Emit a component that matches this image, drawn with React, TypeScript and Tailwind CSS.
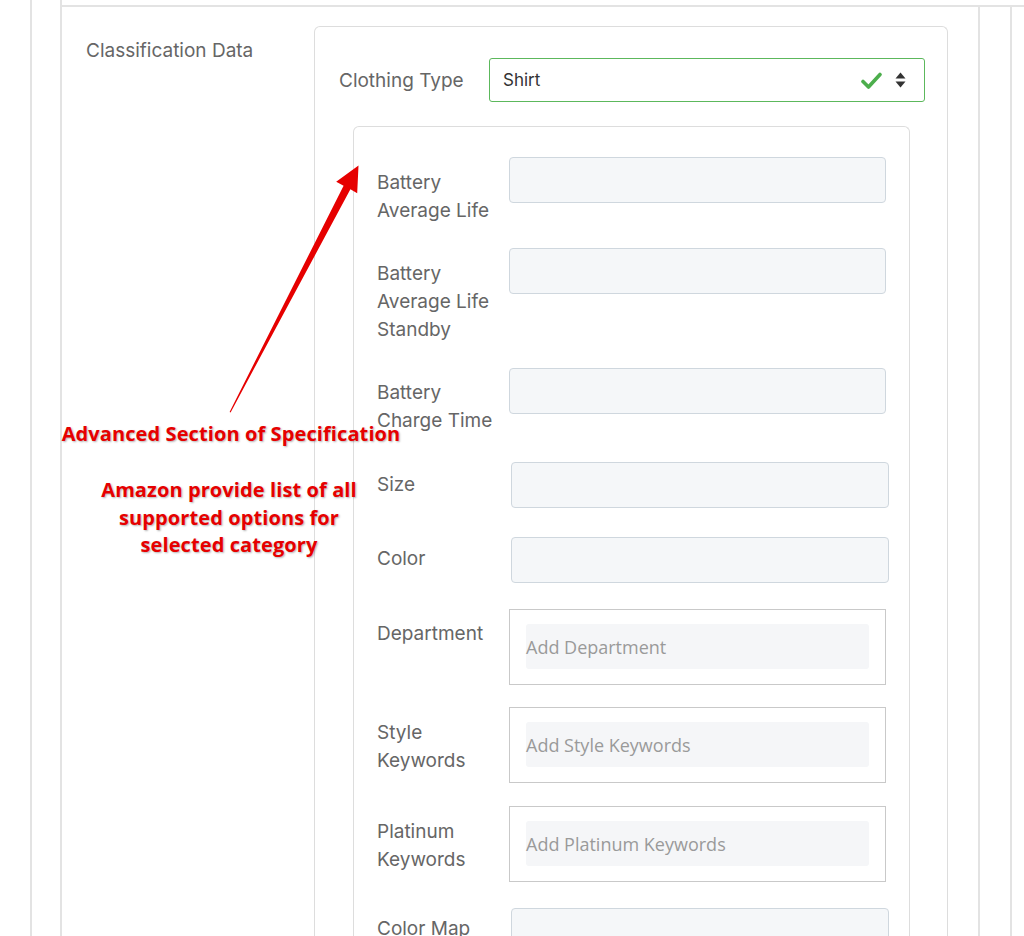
import React from "react";

interface Field {
  label: string[];
  kind: "input" | "tags";
  placeholder?: string;
  gap: number;
  labelPad: number;
  shifted?: boolean;
}

const fields: Field[] = [
  { label: ["Battery", "Average Life"], kind: "input", gap: 0, labelPad: 12 },
  { label: ["Battery", "Average Life", "Standby"], kind: "input", gap: 23, labelPad: 12 },
  { label: ["Battery", "Charge Time"], kind: "input", gap: 24, labelPad: 11 },
  { label: ["Size"], kind: "input", gap: 27, labelPad: 9, shifted: true },
  { label: ["Color"], kind: "input", gap: 29, labelPad: 8, shifted: true },
  { label: ["Department"], kind: "tags", placeholder: "Add Department", gap: 26, labelPad: 11 },
  { label: ["Style", "Keywords"], kind: "tags", placeholder: "Add Style Keywords", gap: 22, labelPad: 12 },
  { label: ["Platinum", "Keywords"], kind: "tags", placeholder: "Add Platinum Keywords", gap: 23, labelPad: 12 },
  { label: ["Color Map"], kind: "input", gap: 26, labelPad: 7, shifted: true },
];

function SpecRow({ field }: { field: Field }) {
  return (
    <div className="flex items-start" style={{ marginTop: field.gap }}>
      <div
        className="w-[132px] shrink-0 text-[19px] leading-[28px] text-[#666]"
        style={{ paddingTop: field.labelPad }}
      >
        {field.label.map((l) => (
          <div key={l}>{l}</div>
        ))}
      </div>
      {field.kind === "input" ? (
        <div
          className={`h-[46px] flex-1 rounded-[4px] border border-[#cfd7de] bg-[#f5f7f9] ${
            field.shifted ? "ml-[2px] -mr-[3px]" : ""
          }`}
        />
      ) : (
        <div className="flex-1 h-[76px] border border-[#c9c9c9] bg-white px-[16px] pt-[14px]">
          <div className="h-[45px] rounded-[3px] bg-[#f5f6f8] flex items-center pt-[2px] font-['Open_Sans',sans-serif] text-[18px] text-[#9a9a9a]">
            {field.placeholder}
          </div>
        </div>
      )}
    </div>
  );
}

function SelectBox() {
  return (
    <div className="flex h-[44px] w-[436px] items-center rounded-[3px] border border-[#5cb85c] pl-[13px] pr-[18px]">
      <span className="flex-1 pt-[2px] text-[17px] text-[#333]">Shirt</span>
      <svg width="21" height="17" viewBox="0 0 21 17" className="mr-[13px]">
        <path
          d="M2 9.5 L7.5 15 L19 2.5"
          fill="none"
          stroke="#4cae4c"
          strokeWidth="3.6"
          strokeLinecap="round"
          strokeLinejoin="round"
        />
      </svg>
      <svg width="11" height="16" viewBox="0 0 11 16">
        <path d="M5.5 0.5 L10.5 6.5 L0.5 6.5 Z" fill="#333" />
        <path d="M0.5 9.5 L10.5 9.5 L5.5 15.5 Z" fill="#333" />
      </svg>
    </div>
  );
}

function Annotation() {
  return (
    <>
      <svg
        className="absolute left-0 top-0 pointer-events-none"
        width="1024"
        height="936"
        viewBox="0 0 1024 936"
      >
        <polygon
          points="229.6,412 343.6,185.7 336.2,181.8 358.5,165.5 357.2,193.2 350.4,189.3 230.6,412.4"
          fill="#e60000"
        />
      </svg>
      <div className="absolute left-[31px] top-[420px] w-[400px] text-center font-['Open_Sans',sans-serif] text-[20px] font-bold leading-[28px] tracking-[0.1px] text-[#e60000] [text-shadow:1px_1px_2px_rgba(0,0,0,0.3)]">
        Advanced Section of Specification
      </div>
      <div className="absolute left-[29px] top-[476px] w-[400px] text-center font-['Open_Sans',sans-serif] text-[20px] font-bold leading-[27.5px] tracking-[0.1px] text-[#e60000] [text-shadow:1px_1px_2px_rgba(0,0,0,0.3)]">
        Amazon provide list of all
        <br />
        supported options for
        <br />
        selected category
      </div>
    </>
  );
}

export default function App() {
  return (
    <div className="relative h-[936px] w-[1024px] overflow-hidden bg-white font-['Inter',sans-serif]">
      <div className="flex h-full">
        <div className="w-[32px] shrink-0 border-r-2 border-[#e3e3e3]" />
        <div className="w-[30px] shrink-0 border-r-2 border-[#e3e3e3]" />
        <div className="mt-[5px] flex flex-1 border-t-2 border-[#e3e3e3]">
          <div className="flex w-[918px] shrink-0 border-r-2 border-[#e3e3e3] pl-[24px] pt-[19px]">
            <div className="w-[228px] shrink-0 pt-[11px] text-[19px] leading-[28px] text-[#666]">
              Classification Data
            </div>
            <div className="w-[634px] rounded-t-[6px] border border-b-0 border-[#dddddd] pl-[24px] pr-[22px] pt-[31px]">
              <div className="flex items-center">
                <div className="w-[150px] shrink-0 pt-[3px] text-[19px] text-[#666]">
                  Clothing Type
                </div>
                <SelectBox />
              </div>
              <div className="ml-[14px] mr-[15px] mt-[24px] h-[900px] rounded-t-[6px] border border-b-0 border-[#dddddd] px-[23px] pt-[30px]">
                {fields.map((f) => (
                  <SpecRow key={f.label.join(" ")} field={f} />
                ))}
              </div>
            </div>
          </div>
          <div className="w-[32px] shrink-0 border-r-2 border-[#e3e3e3]" />
        </div>
      </div>
      <Annotation />
    </div>
  );
}
